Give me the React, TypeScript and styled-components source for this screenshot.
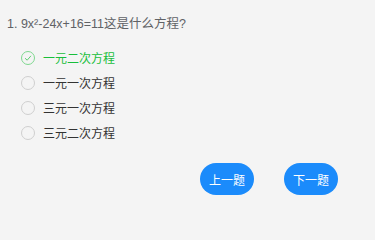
import React, { useState } from "react";
import styled, { createGlobalStyle } from "styled-components";

const GlobalStyle = createGlobalStyle`
  html, body {
    margin: 0;
    padding: 0;
    background: #f4f4f4;
  }
  body {
    font-family: "Liberation Sans", "Noto Sans CJK SC", sans-serif;
  }
`;

const Page = styled.div`
  width: 375px;
  height: 227px;
  box-sizing: border-box;
  padding: 15px 7px 0 7px;
  background: #f4f4f4;
  overflow: hidden;
`;

const Question = styled.div`
  font-size: 12.5px;
  line-height: 18px;
  color: #606266;
`;

const OptionList = styled.div`
  margin-top: 12px;
  padding-left: 14px;
  display: flex;
  flex-direction: column;
`;

const OptionRow = styled.div<{ $active: boolean }>`
  height: 25px;
  display: flex;
  align-items: center;
  gap: 8px;
  font-size: 12px;
  color: ${p => (p.$active ? "#19be3b" : "#333")};
  cursor: pointer;
`;

const Radio = styled.span<{ $active: boolean }>`
  width: 12px;
  height: 12px;
  border-radius: 50%;
  border: 1px solid ${p => (p.$active ? "#7ed88f" : "#cfcfcf")};
  display: flex;
  align-items: center;
  justify-content: center;
  box-sizing: content-box;
`;

const ButtonBar = styled.div`
  margin-top: 18px;
  display: flex;
  justify-content: flex-end;
  gap: 30px;
  padding-right: 30px;
`;

const NavButton = styled.button`
  width: 54px;
  height: 32px;
  border: none;
  border-radius: 16px;
  background: #1b8bfb;
  color: #fff;
  font-size: 12px;
  font-family: "Noto Sans CJK SC", sans-serif;
  padding: 0;
`;

const options = ["一元二次方程", "一元一次方程", "三元一次方程", "三元二次方程"];

export default function App() {
  const [picked, setPicked] = useState(0);
  return (
    <Page>
      <GlobalStyle />
      <Question>1. 9x²-24x+16=11这是什么方程?</Question>
      <OptionList>
        {options.map((o, i) => (
          <OptionRow key={o} $active={picked === i} onClick={() => setPicked(i)}>
            <Radio $active={picked === i}>
              {picked === i && (
                <svg width="8" height="8" viewBox="0 0 8 8">
                  <path d="M1 4.2 L3.2 6.2 L7 1.8" fill="none" stroke="#5fcf73" strokeWidth="1" />
                </svg>
              )}
            </Radio>
            {o}
          </OptionRow>
        ))}
      </OptionList>
      <ButtonBar>
        <NavButton>上一题</NavButton>
        <NavButton>下一题</NavButton>
      </ButtonBar>
    </Page>
  );
}
